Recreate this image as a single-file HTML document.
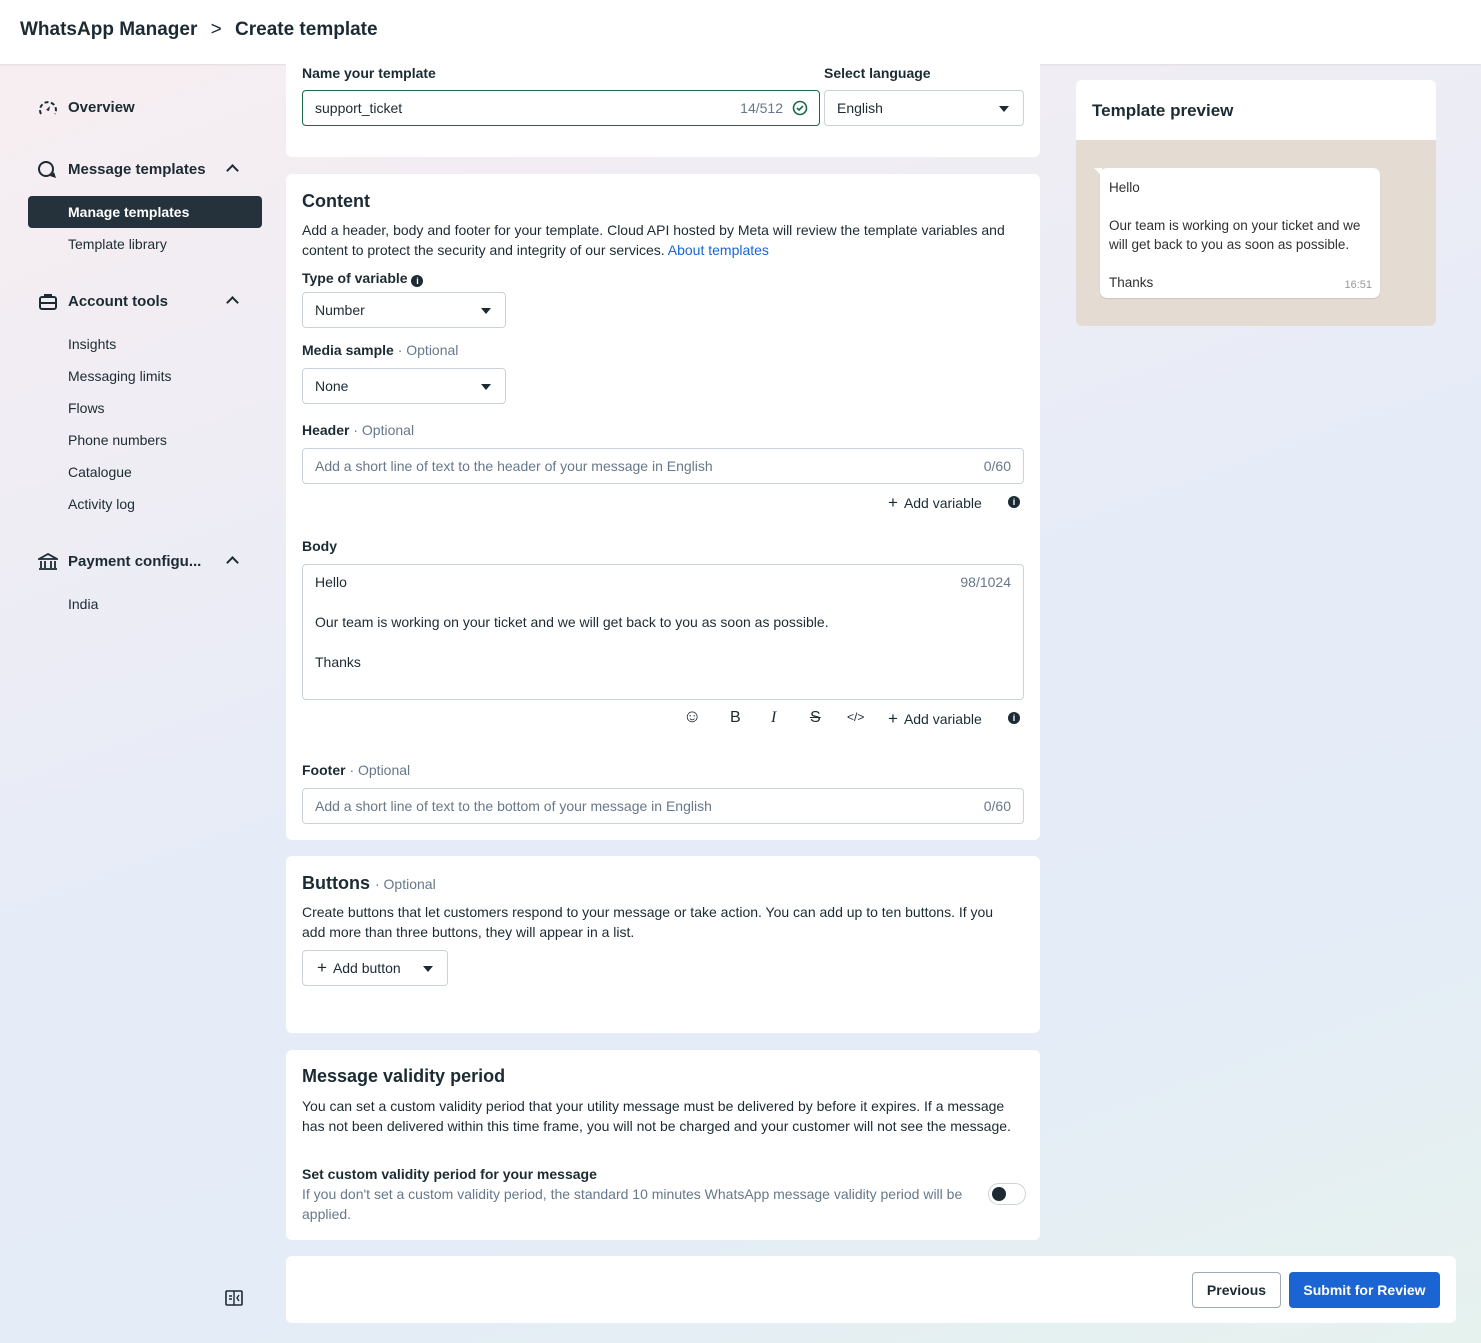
<!DOCTYPE html>
<html><head><meta charset="utf-8"><style>
*{box-sizing:border-box;margin:0;padding:0}
body{width:1481px;height:1343px;overflow:hidden;font-family:"Liberation Sans",sans-serif;color:#1c2b33;font-size:14px;position:relative;
background:linear-gradient(160deg,#f8eef0 0%,#f0edf4 25%,#e6ecf7 50%,#e4ecf7 75%,#e6f2ee 100%);}
.top{position:absolute;left:0;top:0;width:1481px;height:64px;background:#fff;box-shadow:0 1px 2px rgba(0,0,0,.08)}
.top .t{position:absolute;left:20px;top:19px;font-size:19px;font-weight:bold;color:#1c2b33}
.abs{position:absolute}
.nav{position:absolute;left:68px;font-size:14px}
.navh{font-weight:bold;font-size:15px}
.chev{position:absolute;left:228px;width:9px;height:9px;border-left:2px solid #1c2b33;border-top:2px solid #1c2b33;transform:rotate(45deg)}
.card{position:absolute;background:#fff;border-radius:6px}
.lbl{position:absolute;font-weight:bold;font-size:14px}
.opt{font-weight:normal;color:#67788a}
.inp{position:absolute;border:1px solid #cbd2d9;border-radius:4px;background:#fff;height:36px;font-size:14px;padding:9px 12px;color:#1c2b33}
.ph{color:#67788a}
.cnt{position:absolute;right:12px;top:9px;color:#67788a}
.caret{position:absolute;right:14px;top:15px;width:0;height:0;border-left:5px solid transparent;border-right:5px solid transparent;border-top:6px solid #1c2b33}
.h2{position:absolute;font-size:18px;font-weight:bold}
.p{position:absolute;line-height:20px;font-size:14px}
</style></head><body>
<div class="top"><div class="t">WhatsApp Manager <span style="font-weight:normal;margin:0 8px">&gt;</span> Create template</div></div>

<svg class="abs" style="left:37px;top:98px" width="22" height="20" viewBox="0 0 22 20"><path d="M4 16A8 8 0 1 1 18 16" fill="none" stroke="#1c2b33" stroke-width="2" stroke-dasharray="4 2.5"/><path d="M9 12l4-4-1 5z" fill="#1c2b33"/></svg>
<div class="nav navh" style="top:99px">Overview</div>
<svg class="abs" style="left:37px;top:160px" width="22" height="20" viewBox="0 0 22 20"><circle cx="9" cy="9" r="7" fill="none" stroke="#1c2b33" stroke-width="2"/><path d="M13 16l6 2-2-6" fill="#1c2b33"/></svg>
<div class="nav navh" style="top:161px">Message templates</div><div class="chev" style="top:166px"></div>
<div class="abs" style="left:28px;top:196px;width:234px;height:32px;background:#25313b;border-radius:4px"></div>
<div class="nav" style="top:204px;color:#fff;font-weight:bold">Manage templates</div>
<div class="nav" style="top:236px">Template library</div>
<svg class="abs" style="left:38px;top:293px" width="20" height="18" viewBox="0 0 20 18"><rect x="2" y="4" width="16" height="12" rx="2" fill="none" stroke="#1c2b33" stroke-width="2"/><path d="M7 4V2h6v2M2 10h16" stroke="#1c2b33" stroke-width="2" fill="none"/></svg>
<div class="nav navh" style="top:293px">Account tools</div><div class="chev" style="top:298px"></div>
<div class="nav" style="top:336px">Insights</div>
<div class="nav" style="top:368px">Messaging limits</div>
<div class="nav" style="top:400px">Flows</div>
<div class="nav" style="top:432px">Phone numbers</div>
<div class="nav" style="top:464px">Catalogue</div>
<div class="nav" style="top:496px">Activity log</div>
<svg class="abs" style="left:38px;top:553px" width="20" height="18" viewBox="0 0 20 18"><path d="M1 6L10 1l9 5zM3 8v7M7 8v7M13 8v7M17 8v7M1 16h18" stroke="#1c2b33" stroke-width="1.8" fill="none"/></svg>
<div class="nav navh" style="top:553px">Payment configu...</div><div class="chev" style="top:558px"></div>
<div class="nav" style="top:596px">India</div>
<svg class="abs" style="left:225px;top:1290px" width="18" height="16" viewBox="0 0 18 16"><rect x="1" y="1" width="16" height="14" rx="1" fill="none" stroke="#1c2b33" stroke-width="1.6"/><path d="M9 1v14M4 6h3M4 9h3M14 5l-2 3 2 3" stroke="#1c2b33" stroke-width="1.4" fill="none"/></svg>

<div class="card" style="left:286px;top:50px;width:754px;height:107px;border-radius:0 0 6px 6px"></div>
<div class="lbl" style="left:302px;top:65px">Name your template</div>
<div class="lbl" style="left:824px;top:65px">Select language</div>
<div class="inp" style="left:302px;top:90px;width:518px;border-color:#1a6a4a">support_ticket<span class="cnt" style="right:36px">14/512</span>
<svg class="abs" style="right:11px;top:9px" width="16" height="16" viewBox="0 0 16 16"><circle cx="8" cy="8" r="6.5" fill="none" stroke="#1a6a4a" stroke-width="1.6"/><path d="M5 8l2 2 4-4" fill="none" stroke="#1a6a4a" stroke-width="1.6"/></svg></div>
<div class="inp" style="left:824px;top:90px;width:200px">English<span class="caret"></span></div>

<div class="card" style="left:286px;top:174px;width:754px;height:666px"></div>
<div class="h2" style="left:302px;top:191px">Content</div>
<div class="p" style="left:302px;top:220px;width:722px">Add a header, body and footer for your template. Cloud API hosted by Meta will review the template variables and content to protect the security and integrity of our services. <span style="color:#1b64d4">About templates</span></div>
<div class="lbl" style="left:302px;top:270px">Type of variable <span style="display:inline-block;width:12px;height:12px;border-radius:50%;background:#1c2b33;color:#fff;font-size:9px;text-align:center;line-height:12px;vertical-align:-1px">i</span></div>
<div class="inp" style="left:302px;top:292px;width:204px">Number<span class="caret"></span></div>
<div class="lbl" style="left:302px;top:342px">Media sample <span class="opt">· Optional</span></div>
<div class="inp" style="left:302px;top:368px;width:204px">None<span class="caret"></span></div>
<div class="lbl" style="left:302px;top:422px">Header <span class="opt">· Optional</span></div>
<div class="inp" style="left:302px;top:448px;width:722px"><span class="ph">Add a short line of text to the header of your message in English</span><span class="cnt">0/60</span></div>
<div class="abs" style="left:888px;top:493px;font-size:14px"><span style="font-size:17px;margin-right:6px">+</span>Add variable</div>
<div class="abs" style="left:1008px;top:496px;width:12px;height:12px;border-radius:50%;background:#1c2b33;color:#fff;font-size:9px;text-align:center;line-height:12px;font-weight:bold">i</div>
<div class="lbl" style="left:302px;top:538px">Body</div>
<div class="inp" style="left:302px;top:564px;width:722px;height:136px;padding:7px 12px;line-height:20px">Hello<br><br>Our team is working on your ticket and we will get back to you as soon as possible.<br><br>Thanks<span class="cnt" style="top:7px">98/1024</span></div>
<div class="abs" style="left:683px;top:706px;font-size:18px">☺</div>
<div class="abs" style="left:730px;top:709px;font-size:16px">B</div>
<div class="abs" style="left:771px;top:709px;font-size:16px;font-style:italic;font-family:'Liberation Serif',serif">I</div>
<div class="abs" style="left:810px;top:709px;font-size:16px;text-decoration:line-through">S</div>
<div class="abs" style="left:847px;top:710px;font-size:12px">&lt;/&gt;</div>
<div class="abs" style="left:888px;top:709px"><span style="font-size:17px;margin-right:6px">+</span>Add variable</div>
<div class="abs" style="left:1008px;top:712px;width:12px;height:12px;border-radius:50%;background:#1c2b33;color:#fff;font-size:9px;text-align:center;line-height:12px;font-weight:bold">i</div>
<div class="lbl" style="left:302px;top:762px">Footer <span class="opt">· Optional</span></div>
<div class="inp" style="left:302px;top:788px;width:722px"><span class="ph">Add a short line of text to the bottom of your message in English</span><span class="cnt">0/60</span></div>

<div class="card" style="left:286px;top:856px;width:754px;height:177px"></div>
<div class="h2" style="left:302px;top:873px">Buttons <span style="font-size:14px;font-weight:normal;color:#67788a">· Optional</span></div>
<div class="p" style="left:302px;top:902px;width:712px">Create buttons that let customers respond to your message or take action. You can add up to ten buttons. If you add more than three buttons, they will appear in a list.</div>
<div class="inp" style="left:302px;top:950px;width:146px;padding-left:14px"><span style="font-size:17px;margin-right:6px;line-height:14px">+</span>Add button<span class="caret" style="right:14px"></span></div>

<div class="card" style="left:286px;top:1050px;width:754px;height:190px"></div>
<div class="h2" style="left:302px;top:1066px">Message validity period</div>
<div class="p" style="left:302px;top:1096px;width:716px">You can set a custom validity period that your utility message must be delivered by before it expires. If a message has not been delivered within this time frame, you will not be charged and your customer will not see the message.</div>
<div class="lbl" style="left:302px;top:1166px">Set custom validity period for your message</div>
<div class="p" style="left:302px;top:1184px;width:690px;color:#67788a">If you don't set a custom validity period, the standard 10 minutes WhatsApp message validity period will be applied.</div>
<div class="abs" style="left:988px;top:1183px;width:38px;height:22px;border:1px solid #cbd2d9;border-radius:11px;background:#fff"><div style="position:absolute;left:3px;top:3px;width:14px;height:14px;border-radius:50%;background:#1c2b33"></div></div>

<div class="card" style="left:286px;top:1256px;width:1170px;height:67px"></div>
<div class="abs" style="left:1192px;top:1272px;width:89px;height:36px;border:1px solid #a0aab3;border-radius:4px;background:#fff;text-align:center;line-height:34px;font-weight:bold">Previous</div>
<div class="abs" style="left:1289px;top:1272px;width:151px;height:36px;border-radius:4px;background:#1b64d4;color:#fff;text-align:center;line-height:36px;font-weight:bold">Submit for Review</div>

<div class="card" style="left:1076px;top:80px;width:360px;height:246px;overflow:hidden">
<div style="position:absolute;left:16px;top:21px;font-size:17px;font-weight:bold">Template preview</div>
<div style="position:absolute;left:0;top:60px;width:360px;height:186px;background:#e4dbd2"></div>
<div style="position:absolute;left:24px;top:88px;width:280px;height:130px;background:#fff;border-radius:7px;font-size:13.5px;line-height:19px;padding:10px 9px;color:#303030;box-shadow:0 1px 1px rgba(0,0,0,.1)">Hello<br><br>Our team is working on your ticket and we will get back to you as soon as possible.<br><br>Thanks<span style="position:absolute;right:8px;bottom:3px;font-size:11px;color:#999">16:51</span></div>
<div style="position:absolute;left:18px;top:88px;width:0;height:0;border-top:8px solid #fff;border-left:8px solid transparent"></div>
</div>
</body></html>
